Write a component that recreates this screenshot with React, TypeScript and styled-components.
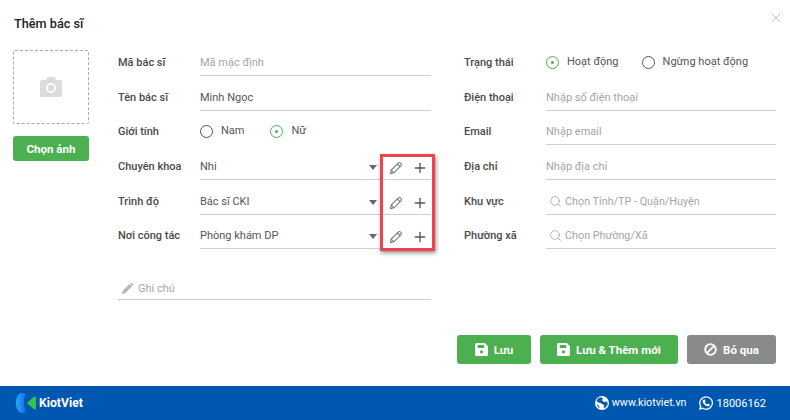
import * as React from "react";
import styled, { createGlobalStyle } from "styled-components";
import { Search, Plus, X } from "lucide-react";

const GlobalStyle = createGlobalStyle`
  html, body {
    margin: 0;
    padding: 0;
    background: #fff;
  }
  body {
    font-family: Roboto, "Liberation Sans", sans-serif;
    font-size: 11px;
    color: #4a4a4a;
  }
`;

function CameraIcon() {
  return (
    <svg width="22" height="20" viewBox="0 0 22 20">
      <path
        fill="#dcdcdc"
        fillRule="evenodd"
        d="M2 3h4l1.500-3h7L16 3h4a2 2 0 0 1 2 2v13a2 2 0 0 1-2 2H2a2 2 0 0 1-2-2V5a2 2 0 0 1 2-2zm9 3a5 5 0 1 0 0 10 5 5 0 0 0 0-10zm0 1.800a3.200 3.200 0 1 1 0 6.400 3.200 3.200 0 0 1 0-6.400z"
      />
    </svg>
  );
}

function SaveIcon() {
  return (
    <svg width="13" height="13" viewBox="0 0 12 12">
      <path
        fill="#fff"
        fillRule="evenodd"
        d="M1.500 0H9l3 3v7.500a1.500 1.500 0 0 1-1.500 1.500h-9A1.500 1.500 0 0 1 0 10.500v-9A1.500 1.500 0 0 1 1.500 0zM2.500 1.800v2.700h6V1.800zM6 6.600a1.500 1.500 0 1 0 0 3 1.500 1.500 0 0 0 0-3z"
      />
    </svg>
  );
}

function BanIcon() {
  return (
    <svg width="13" height="13" viewBox="0 0 12 12">
      <circle cx="6" cy="6" r="4.900" fill="none" stroke="#fff" strokeWidth="1.700" />
      <path d="M2.800 9.200l6.400-6.400" stroke="#fff" strokeWidth="1.700" />
    </svg>
  );
}

function NoteIcon() {
  return (
    <svg width="11" height="11" viewBox="0 0 11 11">
      <path fill="#b5b5b5" d="M0 11l.7-3L7.600 1.100l2.300 2.300L3 10.300zM8.200.5l.5-.4a1 1 0 0 1 1.300 0l.9.9a1 1 0 0 1 0 1.300l-.4.5z" />
    </svg>
  );
}

function PencilIcon() {
  return (
    <svg width="14" height="14" viewBox="0 0 14 14" fill="none" stroke="#777" strokeWidth="1.100">
      <path d="M1.500 12.500l.7-3.400 7-7a1.700 1.700 0 0 1 2.400 0l.3.300a1.700 1.700 0 0 1 0 2.400l-7 7z" />
      <path d="M2.200 9.100l2.700 2.700M8.300 3l2.700 2.700" />
    </svg>
  );
}

function GlobeIcon() {
  return (
    <svg width="14" height="14" viewBox="0 0 14 14">
      <circle cx="7" cy="7" r="7" fill="#fff" />
      <path fill="#0a5ab0" d="M3 2.200l3-1 2 1.200-1 2.200 2.400 1.400 2.800-.4.6 2.600-2.200 3.200-2 .6.4-3-2.800-1.600L2.600 6 1.400 5zM1.600 8.200l2 1 1.200 2.800-1.400-.6z" />
    </svg>
  );
}

function PhoneIcon() {
  return (
    <svg width="14" height="14" viewBox="0 0 14 14">
      <path fill="none" stroke="#fff" strokeWidth="1.300" d="M7 .8a6.200 6.200 0 0 0-5.300 9.400L.9 13l2.900-.8A6.200 6.200 0 1 0 7 .8z" />
      <path fill="#fff" d="M4.800 3.400l1 .1.8 1.900-.7 1a5 5 0 0 0 2.200 2l1-.8 1.800.9c0 1.200-.8 1.800-1.900 1.800-2.700 0-5.300-2.700-5.300-5 0-.9.400-1.500 1.100-1.900z" />
    </svg>
  );
}

function KiotLogo() {
  return (
    <svg width="20" height="20" viewBox="0 0 20 20">
      <defs>
        <linearGradient id="kvBlue" x1="0" y1="0" x2="1" y2="0">
          <stop offset="0" stopColor="#2aa7f5" />
          <stop offset="1" stopColor="#0b6fe6" />
        </linearGradient>
      </defs>
      <path fill="url(#kvBlue)" d="M6 0c1.800 0 3.200.5 4.200 1.200C8.700 3.500 8 6.700 8 10s.7 6.500 2.200 8.800C9.200 19.500 7.800 20 6 20 2.500 20 0 15.500 0 10S2.500 0 6 0z" />
      <path fill="#39c04a" d="M20 3.500v13c-1.800 0-3.300-1-4.800-2.500L11 10l4.200-4c1.500-1.500 3-2.500 4.800-2.500z" />
    </svg>
  );
}

function Field({
  label,
  children,
}: {
  label: string;
  children: React.ReactNode;
}) {
  return (
    <Row>
      <Label>{label}</Label>
      {children}
    </Row>
  );
}

function Radio({ label, checked }: { label: string; checked?: boolean }) {
  return (
    <RadioItem>
      <RadioMark $checked={checked} />
      {label}
    </RadioItem>
  );
}

function SelectField({ value }: { value: string }) {
  return (
    <Line>
      <Value>{value}</Value>
      <Caret />
      <Tools>
        <PencilIcon />
        <Plus size={16} strokeWidth={2} color="#555" />
      </Tools>
    </Line>
  );
}

export default function App() {
  return (
    <>
      <GlobalStyle />
      <Page>
        <Dialog>
          <Header>
            <Title>Thêm bác sĩ</Title>
            <CloseIcon size={14} strokeWidth={1.2} color="#a8a8a8" />
          </Header>
          <Body>
            <Photo>
              <PhotoBox>
                <CameraIcon />
              </PhotoBox>
              <PhotoButton>Chọn ảnh</PhotoButton>
            </Photo>
            <Column>
              <Field label="Mã bác sĩ">
                <Line>
                  <Placeholder>Mã mặc định</Placeholder>
                </Line>
              </Field>
              <Field label="Tên bác sĩ">
                <Line>
                  <Value>Minh Ngọc</Value>
                </Line>
              </Field>
              <Field label="Giới tính">
                <RadioGroup $gap={26}>
                  <Radio label="Nam" />
                  <Radio label="Nữ" checked />
                </RadioGroup>
              </Field>
              <Field label="Chuyên khoa">
                <SelectField value="Nhi" />
              </Field>
              <Field label="Trình độ">
                <SelectField value="Bác sĩ CKI" />
              </Field>
              <Field label="Nơi công tác">
                <SelectField value="Phòng khám DP" />
              </Field>
              <NoteLine>
                <NoteIcon />
                <Placeholder>Ghi chú</Placeholder>
              </NoteLine>
              <Highlight />
            </Column>
            <Column>
              <Field label="Trạng thái">
                <RadioGroup $gap={23}>
                  <Radio label="Hoạt động" checked />
                  <Radio label="Ngừng hoạt động" />
                </RadioGroup>
              </Field>
              <Field label="Điện thoại">
                <Line>
                  <Placeholder>Nhập số điện thoại</Placeholder>
                </Line>
              </Field>
              <Field label="Email">
                <Line>
                  <Placeholder>Nhập email</Placeholder>
                </Line>
              </Field>
              <Field label="Địa chỉ">
                <Line>
                  <Placeholder>Nhập địa chỉ</Placeholder>
                </Line>
              </Field>
              <Field label="Khu vực">
                <SearchLine>
                  <Search size={13} strokeWidth={1.3} color="#999" />
                  <SearchText>Chọn Tỉnh/TP - Quận/Huyện</SearchText>
                </SearchLine>
              </Field>
              <Field label="Phường xã">
                <SearchLine>
                  <Search size={13} strokeWidth={1.3} color="#999" />
                  <SearchText>Chọn Phường/Xã</SearchText>
                </SearchLine>
              </Field>
            </Column>
          </Body>
          <Actions>
            <ActionButton $width={74}>
              <SaveIcon />
              Lưu
            </ActionButton>
            <ActionButton $width={138}>
              <SaveIcon />
              Lưu &amp; Thêm mới
            </ActionButton>
            <ActionButton $width={89} $muted>
              <BanIcon />
              Bỏ qua
            </ActionButton>
          </Actions>
        </Dialog>
        <Footer>
          <Brand>
            <KiotLogo />
            KiotViet
          </Brand>
          <Contacts>
            <Contact>
              <GlobeIcon />
              <Site>www.kiotviet.vn</Site>
            </Contact>
            <PhoneContact>
              <PhoneIcon />
              18006162
            </PhoneContact>
          </Contacts>
        </Footer>
      </Page>
    </>
  );
}

const Page = styled.div`
  width: 790px;
  height: 420px;
  display: flex;
  flex-direction: column;
  overflow: hidden;
`;

const Dialog = styled.main`
  flex: 1;
  display: flex;
  flex-direction: column;
  padding: 17px 14px 0 13px;
`;

const Header = styled.header`
  display: flex;
  justify-content: space-between;
  align-items: flex-start;
  height: 33px;
  padding-left: 1px;
`;

const Title = styled.h1`
  margin: 0;
  font-size: 12.7px;
  line-height: 14px;
  font-weight: 500;
  color: #222;
`;

const CloseIcon = styled(X)`
  margin: -6px -7px 0 0;
`;

const Body = styled.div`
  display: flex;
  height: 285px;
`;

const Photo = styled.div`
  width: 76px;
  margin-right: 29px;
`;

const PhotoBox = styled.div`
  box-sizing: border-box;
  height: 74px;
  display: flex;
  align-items: center;
  justify-content: center;
  border: 1px dashed #aaa;
  border-radius: 2px;
`;

const PhotoButton = styled.button`
  width: 100%;
  height: 25px;
  margin-top: 12px;
  padding: 0;
  border: 0;
  border-radius: 3px;
  background: #4caf50;
  color: #fff;
  font: 700 11.5px Roboto, sans-serif;
`;

const Column = styled.section`
  position: relative;
  width: 313px;
  & + & {
    width: 312px;
    margin-left: 33px;
  }
`;

const Row = styled.div`
  display: flex;
  height: 34.7px;
  align-items: stretch;
`;

const Label = styled.label`
  flex: none;
  width: 82px;
  padding-top: 6px;
  line-height: 13px;
  font-weight: 500;
  color: #4a4a4a;
`;

const Line = styled.div`
  flex: 1;
  display: flex;
  align-items: flex-start;
  height: 26px;
  padding-top: 6px;
  box-sizing: border-box;
  border-bottom: 1px solid #cfcfcf;
  line-height: 13px;
`;

const SearchLine = styled(Line)`
  gap: 3px;
  padding-left: 3px;
`;

const Value = styled.span`
  flex: 1;
  color: #555;
`;

const Placeholder = styled.span`
  color: #a6a6a6;
`;

const SearchText = styled(Placeholder)`
  font-size: 10.8px;
`;

const Caret = styled.i`
  width: 0;
  height: 0;
  margin: 5px 3px 0 0;
  border-left: 4.5px solid transparent;
  border-right: 4.5px solid transparent;
  border-top: 5px solid #666;
`;

const Tools = styled.span`
  display: grid;
  grid-template-columns: 31px 20px;
  height: 12px;
  align-items: center;
  justify-items: center;
  padding-right: 0;
  svg:last-child {
    margin-left: -2px;
  }
`;

const RadioGroup = styled.div<{ $gap: number }>`
  display: flex;
  gap: ${(p) => p.$gap}px;
  padding-top: 5px;
  height: 14px;
`;

const RadioItem = styled.span`
  display: flex;
  align-items: center;
  gap: 8px;
  color: #555;
  line-height: 14px;
`;

const RadioMark = styled.span<{ $checked?: boolean }>`
  box-sizing: border-box;
  width: 13px;
  height: 13px;
  display: flex;
  align-items: center;
  justify-content: center;
  border-radius: 50%;
  border: 1px solid ${(p) => (p.$checked ? "#4caf50" : "#555")};
  &::after {
    content: "";
    width: 3px;
    height: 3px;
    border-radius: 50%;
    background: ${(p) => (p.$checked ? "#4caf50" : "transparent")};
  }
`;

const NoteLine = styled(Line)`
  align-items: center;
  gap: 5px;
  margin-top: 16px;
  padding: 3px 0 0 4px;
`;

const Highlight = styled.div`
  position: absolute;
  left: 262px;
  top: 104px;
  width: 55px;
  height: 97px;
  box-sizing: border-box;
  border: 3px solid #ee4450;
  box-shadow: 1px 2px 4px rgba(0, 0, 0, 0.45);
`;

const Actions = styled.div`
  display: flex;
  justify-content: flex-end;
  gap: 9px;
`;

const ActionButton = styled.button<{ $width: number; $muted?: boolean }>`
  display: flex;
  align-items: center;
  justify-content: center;
  gap: 6px;
  width: ${(p) => p.$width}px;
  height: 29px;
  padding: 0;
  border: 0;
  border-radius: 3px;
  background: ${(p) => (p.$muted ? "#898b8b" : "#4caf50")};
  color: #fff;
  font: 700 11.5px Roboto, sans-serif;
`;

const Footer = styled.footer`
  height: 34px;
  flex: none;
  display: flex;
  align-items: center;
  justify-content: space-between;
  padding: 0 24px 0 16px;
  background: #0057b0;
  color: #fff;
`;

const Brand = styled.div`
  display: flex;
  align-items: center;
  gap: 3px;
  font-size: 12.2px;
  font-weight: 700;
`;

const Contacts = styled.div`
  display: flex;
  gap: 12px;
`;

const Contact = styled.span`
  display: flex;
  align-items: center;
  gap: 3px;
  font-size: 11px;
`;

const PhoneContact = styled(Contact)`
  gap: 4px;
`;

const Site = styled.span`
  font-size: 10.7px;
  margin-top: -1px;
`;
